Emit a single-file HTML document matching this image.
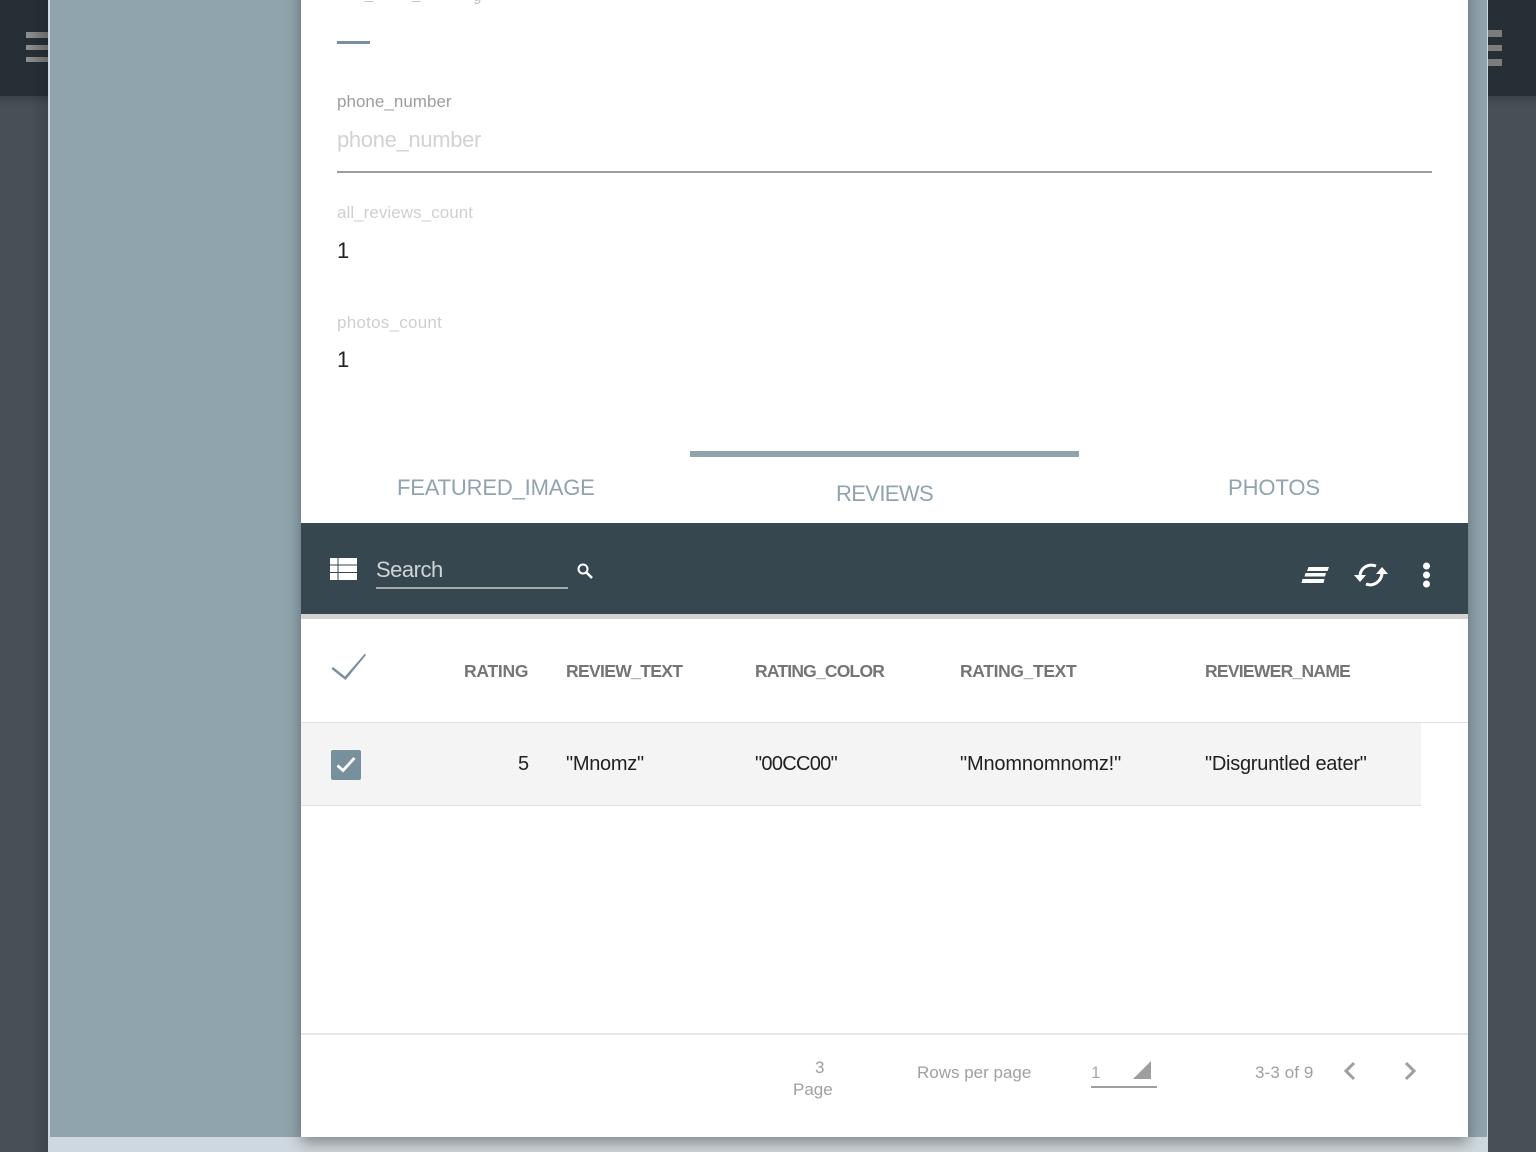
<!DOCTYPE html>
<html><head><meta charset="utf-8"><style>
html,body{margin:0;padding:0;background:#474f57}
#r{position:relative;width:1536px;height:1152px;overflow:hidden;background:#474f57;font-family:"Liberation Sans",sans-serif}
#r div,#r svg{position:absolute}
.t{white-space:nowrap;line-height:1}
.th{font-size:17.5px;font-weight:bold;color:#757575;top:663px}
.td{font-size:20px;color:#212121;top:754px}
</style></head><body><div id="r">
<div style="left:0;top:0;width:1536px;height:96px;background:#262f36"></div>
<div style="left:0;top:96px;width:1536px;height:10px;background:linear-gradient(#3a4249,#474f57)"></div>
<div style="left:26px;top:32px;width:22px;height:6px;background:linear-gradient(90deg,#8f8f8f,#777)"></div>
<div style="left:26px;top:45px;width:22px;height:5px;background:linear-gradient(90deg,#8f8f8f,#777)"></div>
<div style="left:26px;top:57px;width:22px;height:5px;background:linear-gradient(90deg,#8f8f8f,#777)"></div>
<div style="left:1488px;top:30px;width:14px;height:7px;background:#7c7c7c"></div>
<div style="left:1488px;top:45px;width:14px;height:6px;background:#7c7c7c"></div>
<div style="left:1488px;top:59px;width:14px;height:7px;background:#7c7c7c"></div>
<div style="left:30px;top:0;width:18px;height:1152px;background:linear-gradient(90deg,rgba(0,0,0,0),rgba(0,0,0,.12))"></div>
<div style="left:48px;top:0;width:1440px;height:1152px;background:#cfd8de"></div>
<div style="left:50px;top:0;width:1437px;height:1137px;background:#90a4ae"></div>
<div style="left:48px;top:0;width:1439px;height:1152px;overflow:hidden">
<div style="left:253px;top:-60px;width:1167px;height:1197px;background:#fff;box-shadow:0 6px 14px rgba(0,0,0,.36)"></div>
</div>

<div class="t" style="left:365px;top:-13px;font-size:15px;color:#c4c4c4">_</div>
<div class="t" style="left:412px;top:-13px;font-size:15px;color:#c4c4c4">_</div>
<div class="t" style="left:473px;top:-11px;font-size:15px;color:#c4c4c4">g</div>
<div style="left:337px;top:41px;width:33px;height:3px;background:#78909c"></div>
<div class="t" style="left:337px;top:93px;font-size:17px;letter-spacing:.02px;color:#9e9e9e">phone_number</div>
<div class="t" style="left:337px;top:129px;font-size:22px;letter-spacing:-.33px;color:#d2d2d2">phone_number</div>
<div style="left:337px;top:171px;width:1095px;height:2px;background:#9e9e9e"></div>
<div class="t" style="left:337px;top:204px;font-size:17px;letter-spacing:.05px;color:#cfcfcf">all_reviews_count</div>
<div class="t" style="left:337px;top:240px;font-size:22px;color:#212121">1</div>
<div class="t" style="left:337px;top:314px;font-size:17px;letter-spacing:.25px;color:#cfcfcf">photos_count</div>
<div class="t" style="left:337px;top:349px;font-size:22px;color:#212121">1</div>

<div style="left:690px;top:451px;width:389px;height:6px;background:#90a4ae"></div>
<div class="t" style="left:397px;top:477px;font-size:22px;letter-spacing:-.17px;color:#90a4ae">FEATURED_IMAGE</div>
<div class="t" style="left:836px;top:483px;font-size:22px;letter-spacing:-.64px;color:#90a4ae">REVIEWS</div>
<div class="t" style="left:1228px;top:477px;font-size:22px;letter-spacing:-.1px;color:#90a4ae">PHOTOS</div>

<div style="left:301px;top:523px;width:1167px;height:91px;background:#37474f"></div>
<div style="left:301px;top:614px;width:1167px;height:5px;background:#d2d2d2"></div>
<svg style="left:330px;top:558px" width="27" height="22" viewBox="0 0 27 22"><path fill="#fff" d="M0 0h7.500v6.500H0zM8.500 0H27v6.500H8.500zM0 7.500h7.500v6.500H0zM8.500 7.500H27v6.500H8.500zM0 15h7.500v7H0zM8.500 15H27v7H8.500z"/></svg>
<div class="t" style="left:376px;top:559px;font-size:22px;letter-spacing:-.5px;color:#cfd3d5">Search</div>
<div style="left:376px;top:587px;width:192px;height:2px;background:#a9a9a9"></div>
<svg style="left:576px;top:562px" width="18" height="18" viewBox="0 0 18 18"><circle cx="7" cy="7" r="4.500" fill="none" stroke="#fff" stroke-width="2"/><path d="M10.500 10.500L16 16" stroke="#fff" stroke-width="2.600"/></svg>
<svg style="left:1300px;top:566px" width="32" height="18" viewBox="0 0 32 18"><path fill="#fff" d="M8.500 1h20.500l-1.500 4H7zM5.500 7h20.500l-1 3.500H4.500zM2.500 13h22l-1 4H1.500z"/></svg>
<svg style="left:1353px;top:560px" width="36" height="30" viewBox="0 0 36 30"><path fill="none" stroke="#fff" stroke-width="3" d="M7 15C8 8 15 3 23 6M29 14C28 21 21 27 13 24"/><path fill="#fff" d="M1 15h12l-6 7zM23 14h12l-6-7z"/></svg>
<svg style="left:1420px;top:561px" width="13" height="28" viewBox="0 0 13 28"><circle cx="6.500" cy="5" r="3.500" fill="#fff"/><circle cx="6.500" cy="14" r="3.500" fill="#fff"/><circle cx="6.500" cy="23" r="3.500" fill="#fff"/></svg>

<svg style="left:330px;top:650px" width="38" height="32" viewBox="0 0 38 32"><path fill="#78909c" d="M1.500 19L3 17L15 26.500L35 3.500L36 5L15.500 30z"/></svg>
<div class="t th" style="left:464px;letter-spacing:-.25px">RATING</div>
<div class="t th" style="left:566px;letter-spacing:-.65px">REVIEW_TEXT</div>
<div class="t th" style="left:755px;letter-spacing:-.8px">RATING_COLOR</div>
<div class="t th" style="left:960px;letter-spacing:-.36px">RATING_TEXT</div>
<div class="t th" style="left:1205px;letter-spacing:-.73px">REVIEWER_NAME</div>
<div style="left:301px;top:722px;width:1167px;height:1px;background:#e0e0e0"></div>
<div style="left:301px;top:723px;width:1120px;height:82px;background:#f4f4f4"></div>
<div style="left:301px;top:805px;width:1120px;height:1px;background:#e0e0e0"></div>
<div style="left:331px;top:750px;width:30px;height:30px;background:#78909c;border-radius:2px"></div>
<svg style="left:331px;top:750px" width="30" height="30" viewBox="0 0 30 30"><path fill="none" stroke="#fff" stroke-width="2.800" d="M6.500 15.500L12 20.500L23.500 8"/></svg>
<div class="t td" style="left:518px">5</div>
<div class="t td" style="left:566px;letter-spacing:-.28px">"Mnomz"</div>
<div class="t td" style="left:755px;letter-spacing:-.7px">"00CC00"</div>
<div class="t td" style="left:960px;letter-spacing:-.15px">"Mnomnomnomz!"</div>
<div class="t td" style="left:1205px;letter-spacing:-.26px">"Disgruntled eater"</div>

<div style="left:301px;top:1033px;width:1167px;height:2px;background:#e8e8e8"></div>
<div class="t" style="left:815px;top:1059px;font-size:17px;color:#a0a0a0">3</div>
<div class="t" style="left:793px;top:1081px;font-size:17px;color:#a0a0a0">Page</div>
<div class="t" style="left:917px;top:1064px;font-size:17px;color:#a0a0a0">Rows per page</div>
<div class="t" style="left:1091px;top:1064px;font-size:17px;color:#a8a8a8">1</div>
<svg style="left:1133px;top:1061px" width="18" height="18" viewBox="0 0 18 18"><path fill="#9e9e9e" d="M18 0V18H0z"/></svg>
<div style="left:1091px;top:1086px;width:66px;height:2px;background:#9e9e9e"></div>
<div class="t" style="left:1255px;top:1064px;font-size:17px;letter-spacing:.1px;color:#a0a0a0">3-3 of 9</div>
<svg style="left:1343px;top:1061px" width="14" height="20" viewBox="0 0 14 20"><path fill="none" stroke="#9e9e9e" stroke-width="3" d="M11 2L3 10L11 18"/></svg>
<svg style="left:1403px;top:1061px" width="14" height="20" viewBox="0 0 14 20"><path fill="none" stroke="#9e9e9e" stroke-width="3" d="M3 2L11 10L3 18"/></svg>
</div></body></html>
